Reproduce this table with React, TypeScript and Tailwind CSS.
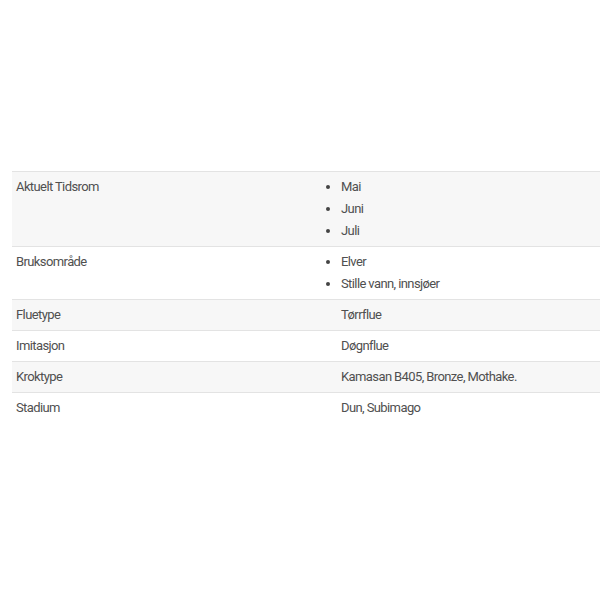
const rows: { label: string; value: string | string[] }[] = [
  { label: "Aktuelt Tidsrom", value: ["Mai", "Juni", "Juli"] },
  { label: "Bruksområde", value: ["Elver", "Stille vann, innsjøer"] },
  { label: "Fluetype", value: "Tørrflue" },
  { label: "Imitasjon", value: "Døgnflue" },
  { label: "Kroktype", value: "Kamasan B405, Bronze, Mothake." },
  { label: "Stadium", value: "Dun, Subimago" },
];

export default function App() {
  return (
    <div className="min-h-[600px] bg-white pt-[171px] pl-[12px] font-['Roboto',sans-serif] text-[13px] leading-[22px] tracking-[-0.6px] text-[#505050]">
      <table className="w-[588px] border-collapse">
        <tbody>
          {rows.map((row, i) => (
            <tr
              key={row.label}
              className={`border-[#e3e3e3] ${i === 0 ? "border-t" : ""} ${
                i < rows.length - 1 ? "border-b" : ""
              } ${i % 2 === 0 ? "bg-[#f7f7f7]" : "bg-white"}`}
            >
              <td className="w-[325px] px-[4px] pt-[4px] pb-[4px] align-top">{row.label}</td>
              <td className="px-[4px] pt-[4px] pb-[4px] align-top">
                {Array.isArray(row.value) ? (
                  <ul className="list-disc pl-0 marker:text-[#444]">
                    {row.value.map((v) => (
                      <li key={v}>{v}</li>
                    ))}
                  </ul>
                ) : (
                  row.value
                )}
              </td>
            </tr>
          ))}
        </tbody>
      </table>
    </div>
  );
}
